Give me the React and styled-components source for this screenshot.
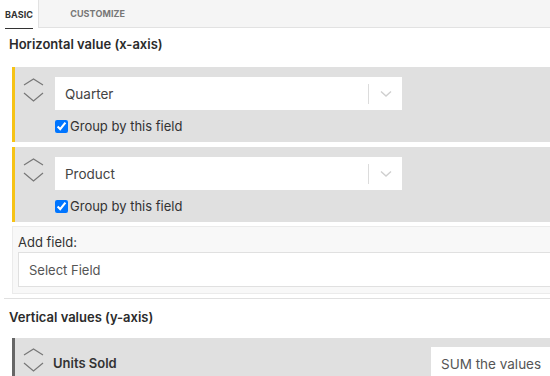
import React from 'react';
import styled, { createGlobalStyle } from 'styled-components';

const GlobalStyle = createGlobalStyle`
  html, body {
    margin: 0;
    padding: 0;
    overflow: hidden;
    background: #fff;
  }
  body {
    font-family: Inter, "Noto Sans", sans-serif;
    color: #333;
  }
`;

const Page = styled.div`
  width: 100%;
  overflow: hidden;
`;

const TabBar = styled.div`
  display: flex;
  height: 28px;
  background: #f5f5f5;
  border-bottom: 1px solid #e2e2e2;
  box-sizing: border-box;
`;

const Tab = styled.div`
  display: flex;
  align-items: center;
  box-sizing: border-box;
  height: ${(p) => (p.active ? '28px' : '27px')};
  padding: ${(p) => (p.active ? '0 5px' : '0 0 0 31px')};
  background: ${(p) => (p.active ? '#fff' : 'transparent')};
  border-right: ${(p) => (p.active ? '1px solid #e2e2e2' : 'none')};
  font-size: 9px;
  font-weight: 700;
  letter-spacing: 0.1px;
  color: ${(p) => (p.active ? '#333' : '#777')};
`;

const TabLabel = styled.span`
  position: relative;
  ${(p) => p.active && `
    &::after {
      content: '';
      position: absolute;
      left: 0;
      right: 0;
      bottom: -9px;
      height: 1px;
      background: #333;
    }
  `}
`;

const Heading = styled.h3`
  margin: ${(p) => p.margin};
  padding-left: 9px;
  font-size: 13px;
  line-height: 16px;
  font-weight: 600;
  color: #2b2b2b;
`;

const FieldList = styled.div`
  display: flex;
  flex-direction: column;
  gap: 5px;
  margin-left: 12px;
`;

const FieldItem = styled.div`
  display: flex;
  background: #e0e0e0;
  border-left: 3px solid ${(p) => p.accent};
  padding: ${(p) => p.pad};
`;

const Handle = styled.div`
  width: 40px;
  flex: none;
  padding-left: 7px;
  box-sizing: border-box;
  display: flex;
  align-items: flex-start;
`;

const FieldBody = styled.div`
  flex: 1;
  display: flex;
  flex-direction: column;
`;

const Select = styled.div`
  display: flex;
  align-items: center;
  width: 347px;
  height: 33px;
  background: #fff;
  box-sizing: border-box;
`;

const SelectText = styled.span`
  flex: 1;
  padding-left: 10px;
  font-size: 13.5px;
  color: #444;
`;

const Separator = styled.span`
  width: 1px;
  height: 20px;
  background: #dcdcdc;
`;

const Indicator = styled.span`
  display: flex;
  align-items: center;
  width: 33px;
  justify-content: center;
`;

const CheckRow = styled.label`
  display: flex;
  align-items: center;
  height: 18px;
  margin-top: 7px;
  font-size: 13px;
  color: #333;
`;

const Check = styled.input`
  width: 13px;
  height: 13px;
  margin: 0 2px 0 0;
`;

const AddPanel = styled.div`
  margin: 4px 0 0 12px;
  padding: 7px 0 6px 5px;
  background: #f8f8f8;
  border: 1px solid #ebebeb;
  border-right: none;
`;

const AddLabel = styled.div`
  font-size: 13px;
  line-height: 16px;
  color: #333;
  margin-bottom: 2px;
`;

const AddSelect = styled.div`
  height: 35px;
  box-sizing: border-box;
  display: flex;
  align-items: center;
  padding-left: 10px;
  background: #fff;
  border: 1px solid #e0e0e0;
  border-right: none;
  font-size: 13px;
  color: #555;
`;

const Divider = styled.hr`
  margin: 4px 0 0 4px;
  border: none;
  border-top: 1px solid #e0e0e0;
`;

const ValueRow = styled.div`
  flex: 1;
  display: flex;
  justify-content: space-between;
  align-items: flex-start;
`;

const ValueName = styled.span`
  margin-top: 8px;
  margin-left: -2px;
  font-size: 13px;
  font-weight: 600;
  color: #333;
`;

const AggSelect = styled.div`
  width: 119px;
  height: 33px;
  background: #fff;
  display: flex;
  align-items: center;
  padding-left: 10px;
  box-sizing: border-box;
  white-space: nowrap;
  overflow: hidden;
  font-size: 13.5px;
  color: #555;
`;

const SortIcon = () => (
  <svg width="24" height="26" viewBox="0 0 24 26" fill="none" stroke="#777" strokeWidth="1.2">
    <polyline points="2,8 11.5,2 21,8" />
    <polyline points="2,16 11.5,24 21,16" />
  </svg>
);

const ChevronDown = () => (
  <svg width="12" height="8" viewBox="0 0 12 8" fill="none" stroke="#cfcfcf" strokeWidth="1.4">
    <polyline points="1,1.5 6,6 11,1.5" />
  </svg>
);

const GroupField = ({ name }) => (
  <FieldItem accent="#f6c316" pad="10px 0 7px 0">
    <Handle>
      <SortIcon />
    </Handle>
    <FieldBody>
      <Select>
        <SelectText>{name}</SelectText>
        <Separator />
        <Indicator>
          <ChevronDown />
        </Indicator>
      </Select>
      <CheckRow>
        <Check type="checkbox" defaultChecked />
        Group by this field
      </CheckRow>
    </FieldBody>
  </FieldItem>
);

export default function App() {
  return (
    <Page>
      <GlobalStyle />
      <TabBar>
        <Tab active>
          <TabLabel active>BASIC</TabLabel>
        </Tab>
        <Tab>
          <TabLabel>CUSTOMIZE</TabLabel>
        </Tab>
      </TabBar>

      <Heading margin="8px 0 15px">Horizontal value (x-axis)</Heading>
      <FieldList>
        <GroupField name="Quarter" />
        <GroupField name="Product" />
      </FieldList>

      <AddPanel>
        <AddLabel>Add field:</AddLabel>
        <AddSelect>Select Field</AddSelect>
      </AddPanel>

      <Divider />

      <Heading margin="10px 0 13px">Vertical values (y-axis)</Heading>
      <FieldList>
        <FieldItem accent="#666" pad="9px 0 10px 0">
          <Handle>
            <SortIcon />
          </Handle>
          <ValueRow>
            <ValueName>Units Sold</ValueName>
            <AggSelect>SUM the values</AggSelect>
          </ValueRow>
        </FieldItem>
      </FieldList>
    </Page>
  );
}
